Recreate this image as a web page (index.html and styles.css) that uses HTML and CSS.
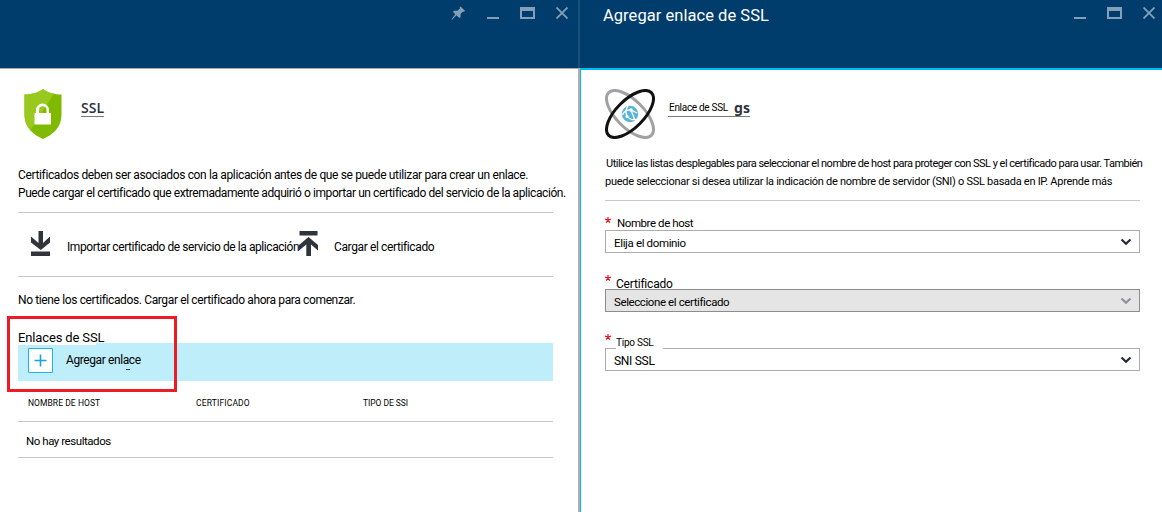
FILE: index.html
```html
<!DOCTYPE html>
<html lang="es">
<head>
<meta charset="utf-8">
<title>Agregar enlace de SSL</title>
<link rel="stylesheet" href="styles.css">
</head>
<body>
<main class="blades">
  <section class="blade blade-ssl">
    <header class="blade-header">
      <div class="controls">
        <svg class="ctl pin" width="15" height="15" viewBox="0 0 15 15"><path d="M9.5 0.500L14 4.800L12.800 6L12 5.600L9.600 8L9.500 11.300L8.300 12L5.500 9.300L1 13.800L0.500 13.300L4.300 8.300L2 6L3 4.800L6.300 4.800L9 2.500L8.600 1.500Z"/></svg>
        <svg class="ctl min" width="12" height="14" viewBox="0 0 12 14"><path d="M0 11h12v2H0z"/></svg>
        <svg class="ctl max" width="15" height="12" viewBox="0 0 15 12"><path fill-rule="evenodd" d="M0 0h15v12H0zM2 4v6h11V4z"/></svg>
        <svg class="ctl close" width="12" height="12" viewBox="0 0 12 12"><path class="stroke" d="M.5.5l11 11M11.500.5l-11 11"/></svg>
      </div>
    </header>
    <div class="blade-body">
      <div class="summary">
        <svg class="shield" width="38" height="50" viewBox="0 0 38 50">
          <path fill="#7fba00" d="M19 0C24 4 31 5.500 37.500 5.500V26C37.500 39 28 46 19 50C10 46 .5 39 .5 26V5.500C7 5.500 14 4 19 0Z"/>
          <path fill="#99c81e" d="M19 0C22 2.500 26 4 30 4.800L6.500 41C2.500 37 .5 32 .5 26V5.500C7 5.500 14 4 19 0Z"/>
          <path fill="#fff" fill-rule="evenodd" d="M10.500 24h1.500v-3a6.500 6.500 0 0 1 13 0v3H27v11.500H10.500zM15 24h7.500v-3a3.700 3.700 0 0 0-7.500 0z"/>
        </svg>
        <h2 class="summary-title">SSL</h2>
      </div>
      <p class="intro"><span class="intro-a">Certificados deben ser asociados con la aplicación antes de que se puede utilizar para crear un enlace.</span><br><span class="intro-b">Puede cargar el certificado que extremadamente adquirió o importar un certificado del servicio de la aplicación.</span></p>
      <div class="actions">
        <div class="action action-import">
          <svg width="20" height="25" viewBox="0 0 20 25"><path d="M7.500 0h4.500v12L19 5.500V11.500L9.800 19L0 11.500V5.500L7.500 12zM0 20.500h19V25H0z"/></svg>
          <span>Importar certificado de servicio de la aplicación</span>
        </div>
        <div class="action action-upload">
          <svg width="20" height="25" viewBox="0 0 20 25"><path d="M.5 0h18v4.500H.5zM9.500 6L19 14v5.500L12 13.500V25H7.300V13.500L0 19.500V14z"/></svg>
          <span>Cargar el certificado</span>
        </div>
      </div>
      <p class="empty-note">No tiene los certificados. Cargar el certificado ahora para comenzar.</p>
      <h3 class="bindings-title"><span>Enlaces de SSL</span></h3>
      <div class="add-row">
        <svg width="25" height="25" viewBox="0 0 25 25"><path fill="#fff" stroke="#1fb0ee" d="M.5.5h24v24H.5z"/><path stroke="#1ba1e2" stroke-width="1.600" d="M12.500 6.500v12M6.500 12.500h12"/></svg>
        <span class="add-label">Agregar enlace</span>
        <i class="add-dash"></i>
      </div>
      <div class="table-head"><span class="th-host">NOMBRE DE HOST</span><span class="th-cert">CERTIFICADO</span><span class="th-type">TIPO DE SSI</span></div>
      <div class="table-empty"><span>No hay resultados</span></div>
      <div class="highlight"></div>
    </div>
  </section>
  <section class="blade blade-add">
    <header class="blade-header">
      <h1 class="blade-title">Agregar enlace de SSL</h1>
      <div class="controls">
        <svg class="ctl min" width="12" height="14" viewBox="0 0 12 14"><path d="M0 11h12v2H0z"/></svg>
        <svg class="ctl max" width="15" height="12" viewBox="0 0 15 12"><path fill-rule="evenodd" d="M0 0h15v12H0zM2 4v6h11V4z"/></svg>
        <svg class="ctl close" width="12" height="12" viewBox="0 0 12 12"><path class="stroke" d="M.5.5l11 11M11.500.5l-11 11"/></svg>
      </div>
    </header>
    <div class="blade-body">
      <div class="summary">
        <svg class="orbit" width="50" height="50" viewBox="0 0 50 50" fill="none">
          <ellipse cx="25" cy="25" rx="30.200" ry="13.800" transform="rotate(45 25 25)" stroke="#a0a1a2" stroke-width="3"/>
          <circle cx="25" cy="25" r="8.200" fill="#59b4d9"/>
          <path stroke="#fff" stroke-width="1.300" d="M23 17Q19.500 22 22 27Q25 31.500 31 30.500M17.500 26Q20 20.500 26 21L32 24M26 21L29.500 30"/>
          <circle cx="22" cy="27.500" r="1.500" fill="#fff"/><circle cx="26" cy="21" r="1.700" fill="#fff"/>
          <ellipse cx="25" cy="25" rx="30.200" ry="13.800" transform="rotate(-45 25 25)" stroke="#111" stroke-width="3"/>
        </svg>
        <h2 class="binding-title"><span class="binding-name">Enlace de SSL</span><span class="binding-tail">gs</span></h2>
      </div>
      <p class="help"><span class="help-a">Utilice las listas desplegables para seleccionar el nombre de host para proteger con SSL y el certificado para usar. También</span><br><span class="help-b">puede seleccionar si desea utilizar la indicación de nombre de servidor (SNI) o SSL basada en IP. Aprende más</span></p>
      <div class="field">
        <label class="label"><svg class="req" width="6" height="6" viewBox="0 0 6 6"><path d="M3 0v3M0 2.200L3 3L6 2.200M1.200 5.700L3 3L4.800 5.700"/></svg><span class="l-host">Nombre de host</span></label>
        <div class="select"><span class="v-host">Elija el dominio</span><svg width="12" height="8" viewBox="0 0 12 8"><path d="M1.500 1.500L6 5.800L10.500 1.500"/></svg></div>
      </div>
      <div class="field">
        <label class="label low"><svg class="req" width="6" height="6" viewBox="0 0 6 6"><path d="M3 0v3M0 2.200L3 3L6 2.200M1.200 5.700L3 3L4.800 5.700"/></svg><span class="l-cert">Certificado</span></label>
        <div class="select disabled"><span class="v-cert">Seleccione el certificado</span><svg width="12" height="8" viewBox="0 0 12 8"><path d="M1.500 1.500L6 5.800L10.500 1.500"/></svg></div>
      </div>
      <div class="field">
        <label class="label low"><svg class="req" width="6" height="6" viewBox="0 0 6 6"><path d="M3 0v3M0 2.200L3 3L6 2.200M1.200 5.700L3 3L4.800 5.700"/></svg><span class="l-type">Tipo SSL</span></label>
        <div class="select"><span class="v-type">SNI SSL</span><svg width="12" height="8" viewBox="0 0 12 8"><path d="M1.500 1.500L6 5.800L10.500 1.500"/></svg></div>
      </div>
    </div>
  </section>
</main>
</body>
</html>
```
FILE: styles.css
```css
* { box-sizing: border-box; margin: 0; padding: 0; }
body { width: 1162px; height: 512px; overflow: hidden; background: #fff; color: #000; font: 12px/18px Roboto, "Liberation Sans", sans-serif; white-space: nowrap; }
svg { display: block; flex: none; }
.blades { display: flex; height: 512px; }
.blade { display: flex; flex-direction: column; }
.blade-ssl { width: 578px; }
.blade-add { width: 584px; }
.blade-header { display: flex; height: 68px; background: #003d6c; flex: none; }
.blade-add .blade-header { border-left: 2px solid #1c507b; }
.blade-body { flex: 1; position: relative; padding-top: 20px; }
.blade-ssl .blade-body { border-top: 1px solid #a9a9a9; padding-left: 18px; }
.blade-add .blade-body { margin-left: 2px; border-top: 2px solid #00bcf2; border-left: 1px solid #00bcf2; box-shadow: -2px 0 #b0b0b0; padding: 19px 0 0 24px; }

.controls { display: flex; margin-left: auto; padding: 7px 10px 0 0; fill: #83a0b8; }
.blade-add .controls { padding-right: 7px; }
.pin { margin: -1px 21px 0 0; }
.min { margin: -1px 21px 0 0; }
.max { margin-right: 21px; }
.stroke { stroke: #83a0b8; stroke-width: 1.800; }
.blade-title { color: #fff; font-size: 16.500px; font-weight: 400; line-height: 20px; padding: 6px 0 0 23px; letter-spacing: .04px; }

.summary { display: flex; height: 50px; margin-bottom: 27px; }
.blade-ssl .summary { padding-left: 6px; }
.summary-title { height: 18px; margin: 10px 0 0 19px; border-bottom: 1px solid #77797e; color: #2d323a; font: 600 14px/18px "Open Sans", sans-serif; }
.intro { height: 46px; }
.intro-a { letter-spacing: -.36px; }
.intro-b { letter-spacing: -.415px; }
.actions { display: flex; height: 65px; width: 535px; border: solid #c8c8c8; border-width: 1px 0; padding: 18px 0 0 12px; fill: #2f343d; }
.action { display: flex; }
.action-import { width: 269px; letter-spacing: -.43px; }
.action-import svg { margin-left: 1px; }
.action-upload { letter-spacing: -.38px; }
.action span { margin: 7px 0 0 16px; }
.action-upload span { margin-left: 15px; }
.empty-note { padding-top: 14px; height: 53px; letter-spacing: -.37px; }
.bindings-title { font-size: 13px; line-height: 16px; font-weight: 400; height: 13px; position: relative; z-index: 1; letter-spacing: -.14px; }
.bindings-title span { display: inline-block; height: 15px; width: 78px; background: #fff; }
.add-row { display: flex; position: relative; width: 535px; height: 38px; background: #bdeefa; padding: 5px 0 0 10px; }
.add-label { margin: 3px 0 0 13px; letter-spacing: -.4px; }
.add-dash { position: absolute; left: 108px; top: 26px; width: 4px; height: 1px; background: #35424c; }
.table-head { display: grid; grid-template-columns: 168px 167px 190px; width: 535px; height: 41px; padding: 15px 0 0 10px; border-bottom: 1px solid #c8c8c8; font-size: 8.500px; line-height: 14px; }
.th-host { letter-spacing: .06px; }
.th-cert { letter-spacing: .15px; }
.th-type { letter-spacing: -.06px; }
.table-empty { width: 535px; height: 36px; padding: 10px 0 0 8px; border-bottom: 1px solid #c8c8c8; font-size: 11.500px; letter-spacing: -.45px; }
.highlight { position: absolute; left: 7px; top: 247px; width: 170px; height: 76px; border: 3px solid #ed1c24; z-index: 2; }

.binding-title { display: flex; height: 18px; width: 82px; margin: 10px 0 0 13px; border-bottom: 1px solid #77797e; font-size: 10px; font-weight: 400; }
.binding-name { width: 67px; padding-left: 1px; letter-spacing: -.3px; }
.binding-tail { color: #2d323a; font: 700 14px/17px "Noto Sans", sans-serif; }
.blade-add .summary { margin-bottom: 16px; }
.help { width: 535px; height: 46px; border-bottom: 1px solid #c8c8c8; font-size: 11px; }
.help-a { padding-left: 1px; letter-spacing: -.507px; }
.help-b { letter-spacing: -.28px; }
.field { width: 535px; height: 59px; }
.label { display: flex; height: 29px; padding-top: 13px; }
.label.low { padding-top: 15px; position: relative; }
.req { margin: 3px 6px 0 0; fill: none; stroke: #e81123; stroke-width: 1.200; }
.low .req { margin: 0 5px 0 0; }
.select { display: flex; height: 23px; border: 1px solid #acacac; padding: 3px 7px 0 8px; justify-content: space-between; }
.select svg { margin-top: 4px; fill: none; stroke: #252b35; stroke-width: 2.200; }
.disabled { background: #e5e5e5; border-color: #8c8c8c; }
.disabled svg { stroke: #8e9194; }
.l-host { font-size: 11.500px; letter-spacing: -.42px; }
.l-cert { height: 14px; letter-spacing: -.2px; }
.l-type { font-size: 10px; letter-spacing: -.25px; background: #fff; width: 47px; height: 17px; }
.v-host { font-size: 11.500px; letter-spacing: -.35px; }
.v-cert { font-size: 11.500px; letter-spacing: -.4px; }
.v-type { letter-spacing: -.3px; }
```
